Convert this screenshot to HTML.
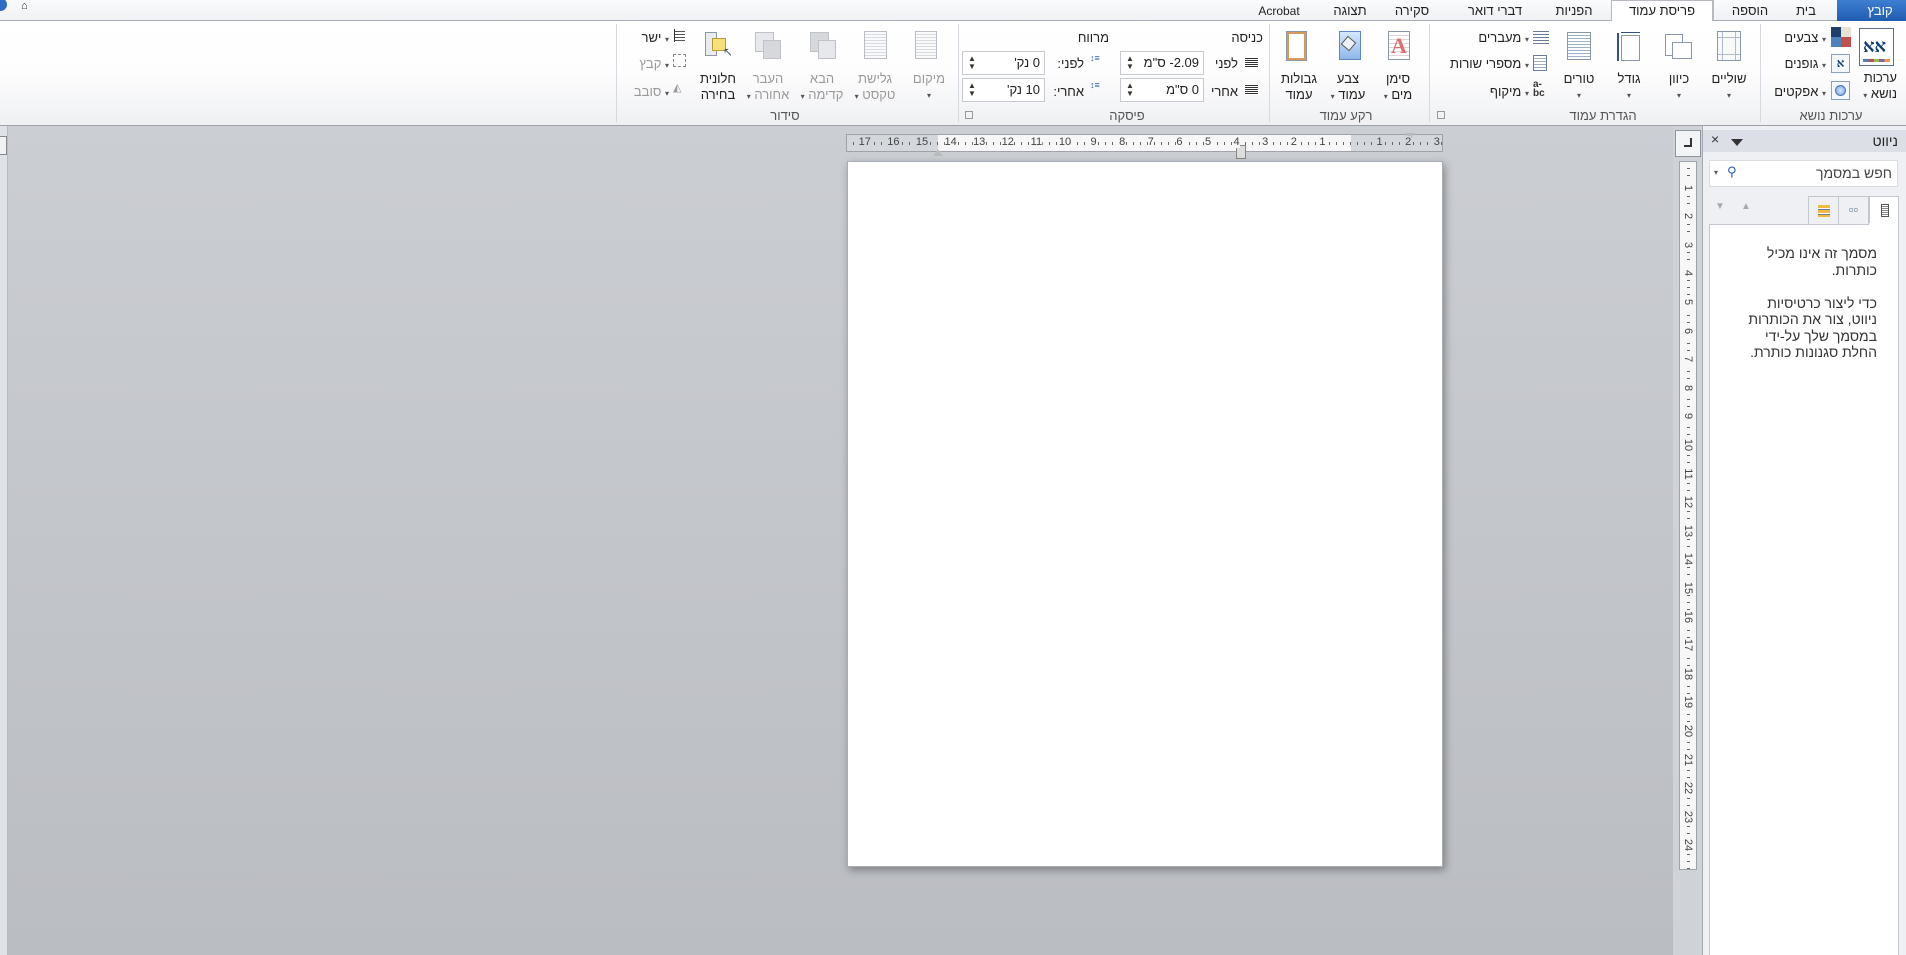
<!DOCTYPE html>
<html><head><meta charset="utf-8">
<style>
*{margin:0;padding:0;box-sizing:border-box}
body{width:1906px;height:955px;overflow:hidden;position:relative;font-family:"Liberation Sans","DejaVu Sans",sans-serif;background:#c4c7cc;color:#222}
.a{position:absolute}
.t{position:absolute;white-space:nowrap;font-size:13px;line-height:15px;direction:rtl}
.c{position:absolute;white-space:nowrap;font-size:13px;line-height:16px;text-align:center;direction:rtl;transform:translateX(-50%)}
.g{color:#9a9a9a}
.dd{font-size:8px;color:#555}
.sep{position:absolute;top:24px;width:1px;height:98px;background:#d6dae0}
.lab{position:absolute;top:108px;font-size:13px;color:#555;transform:translateX(-50%);white-space:nowrap;direction:rtl}
.spin{position:absolute;height:24px;background:#fff;border:1px solid #c6cad0;font-size:13px;line-height:22px;direction:rtl;padding-right:4px}
.spin i{position:absolute;left:5px;font-style:normal;font-size:8px;color:#333;line-height:8px}
.rn{position:absolute;font-size:11px;color:#444;transform:translateX(-50%);top:136px;background:inherit}
.vn{position:absolute;left:1681px;font-size:11px;color:#444;transform:rotate(90deg);width:14px;text-align:center}
</style></head><body>
<!-- tab bar -->
<div class="a" style="left:0;top:0;width:1906px;height:21px;background:linear-gradient(#fbfcfd,#eef0f3);border-bottom:1px solid #a9adb3"></div>
<div class="a" style="left:-6px;top:-2px;width:13px;height:13px;border-radius:50%;background:#2d6bc7"></div>
<div class="a" style="left:21px;top:0px;font-size:11px">⌂</div>
<div class="a" style="left:1837px;top:0;width:69px;height:21px;background:linear-gradient(#3e7fd1,#1f5cb0)"></div>
<div class="c" style="left:1880px;top:3px;color:#fff">קובץ</div>
<div class="c" style="left:1806px;top:3px">בית</div>
<div class="a" style="left:1713px;top:0;width:1px;height:21px;background:#b8bcc2"></div>
<div class="c" style="left:1750px;top:3px">הוספה</div>
<div class="a" style="left:1611px;top:0;width:102px;height:22px;background:#fff;border:1px solid #b6bac0;border-bottom:none"></div>
<div class="c" style="left:1662px;top:3px">פריסת עמוד</div>
<div class="c" style="left:1574px;top:3px">הפניות</div>
<div class="c" style="left:1495px;top:3px">דברי דואר</div>
<div class="c" style="left:1412px;top:3px">סקירה</div>
<div class="c" style="left:1350px;top:3px">תצוגה</div>
<div class="c" style="left:1279px;top:3px;font-size:12px">Acrobat</div>
<!-- ribbon -->
<div class="a" style="left:0;top:21px;width:1906px;height:105px;background:linear-gradient(#fff 0%,#fdfdfe 50%,#eff0f2 100%);border-bottom:1px solid #9ea2a8"></div>
<div class="sep" style="left:1760px"></div><div class="sep" style="left:1429px"></div><div class="sep" style="left:1269px"></div><div class="sep" style="left:958px"></div><div class="sep" style="left:616px"></div>
<!-- ערכות נושא -->
<div class="a" style="left:1859px;top:28px;width:35px;height:38px;border:1px solid #5b6f8b;background:#fff"><div style="font:bold 18px 'DejaVu Serif',serif;color:#123f7c;margin:7px 0 0 3px">אא</div><div class="a" style="left:3px;bottom:3px;width:27px;height:3px;background:linear-gradient(90deg,#4f81bd 20%,#c0504d 20% 40%,#9bbb59 40% 60%,#8064a2 60% 80%,#f79646 80%)"></div></div>
<div class="t" style="right:9px;top:70px">ערכות</div>
<div class="t" style="right:9px;top:86px">נושא <span class="dd">▾</span></div>
<div class="a" style="left:1831px;top:27px;width:20px;height:20px;background:linear-gradient(90deg,#1f3f6e 50%,#e8e2d2 50%);"><div class="a" style="left:0;top:10px;width:20px;height:10px;background:linear-gradient(90deg,#4f81bd 50%,#c0504d 50%)"></div></div>
<div class="t" style="right:80px;top:30px"><span class="dd">▾</span> צבעים</div>
<div class="a" style="left:1831px;top:54px;width:19px;height:19px;border:1px solid #8aa0bd;background:#f4f7fb;font:bold 12px serif;text-align:center;line-height:17px;color:#123f7c">א</div>
<div class="t" style="right:80px;top:56px"><span class="dd">▾</span> גופנים</div>
<div class="a" style="left:1831px;top:81px;width:19px;height:19px;border:1px solid #8aa0bd;background:#f4f7fb"><div style="margin:3px;width:11px;height:11px;border-radius:50%;background:radial-gradient(#d8e8ff,#6b9be0);border:1px solid #4a74b4"></div></div>
<div class="t" style="right:80px;top:84px"><span class="dd">▾</span> אפקטים</div>
<div class="lab" style="left:1831px">ערכות נושא</div>
<!-- הגדרת עמוד -->
<div class="a" style="left:1717px;top:31px;width:24px;height:30px;border:1px solid #8a97a8;background:#f8f9fb"><div class="a" style="left:4px;top:0;width:1px;height:28px;background:#b0bccb"></div><div class="a" style="right:4px;top:0;width:1px;height:28px;background:#b0bccb"></div><div class="a" style="left:0;top:5px;width:22px;height:1px;background:#b0bccb"></div><div class="a" style="left:0;bottom:5px;width:22px;height:1px;background:#b0bccb"></div></div>
<div class="c" style="left:1729px;top:71px">שוליים</div><div class="c dd" style="left:1729px;top:88px">▾</div>
<div class="a" style="left:1665px;top:34px;width:18px;height:22px;border:1px solid #8a97a8;background:#fff"></div><div class="a" style="left:1672px;top:42px;width:20px;height:17px;border:1px solid #8a97a8;background:#fff"></div>
<div class="c" style="left:1679px;top:71px">כיוון</div><div class="c dd" style="left:1679px;top:88px">▾</div>
<div class="a" style="left:1617px;top:33px;width:2px;height:28px;background:#34508a"></div><div class="a" style="left:1621px;top:35px;width:19px;height:26px;border:1px solid #8a97a8;background:#fff"></div><div class="a" style="left:1621px;top:32px;width:19px;height:1px;background:#34508a"></div>
<div class="c" style="left:1629px;top:71px">גודל</div><div class="c dd" style="left:1629px;top:88px">▾</div>
<div class="a" style="left:1567px;top:32px;width:24px;height:28px;border:1px solid #8a97a8;background:repeating-linear-gradient(#fff 0 2px,#9fb0c6 2px 3px)"></div>
<div class="c" style="left:1579px;top:71px">טורים</div><div class="c dd" style="left:1579px;top:88px">▾</div>
<div class="a" style="left:1533px;top:29px;width:16px;height:15px;background:repeating-linear-gradient(#fff 0 2px,#6a7b94 2px 3px)"></div>
<div class="t" style="right:377px;top:30px"><span class="dd">▾</span> מעברים</div>
<div class="a" style="left:1533px;top:55px;width:14px;height:16px;border:1px solid #6a7b94;background:repeating-linear-gradient(#fff 0 2px,#9fb0c6 2px 3px)"></div>
<div class="t" style="right:377px;top:56px"><span class="dd">▾</span> מספרי שורות</div>
<div class="a" style="left:1533px;top:80px;font-size:10px;line-height:9px;font-weight:bold;color:#333">a-<br>bc</div>
<div class="t" style="right:377px;top:84px"><span class="dd">▾</span> מיקוף</div>
<div class="lab" style="left:1603px">הגדרת עמוד</div>
<div class="a" style="left:1437px;top:111px;width:8px;height:8px;border:1px solid #999"></div>
<!-- רקע עמוד -->
<div class="a" style="left:1388px;top:31px;width:22px;height:29px;border:1px solid #8a97a8;background:repeating-linear-gradient(#fff 0 3px,#e6d3d3 3px 4px);color:#e07070;font:bold 22px serif;text-align:center;line-height:28px">A</div>
<div class="c" style="left:1398px;top:71px">סימן</div><div class="c" style="left:1398px;top:87px">מים <span class="dd">▾</span></div>
<div class="a" style="left:1339px;top:31px;width:22px;height:29px;border:1px solid #5f87bb;background:linear-gradient(#d5e7fb,#8fb8ea)"></div><div class="a" style="left:1343px;top:38px;width:11px;height:11px;background:#eef2f6;border:1px solid #555;transform:rotate(40deg)"></div>
<div class="c" style="left:1348px;top:71px">צבע</div><div class="c" style="left:1348px;top:87px">עמוד <span class="dd">▾</span></div>
<div class="a" style="left:1287px;top:32px;width:19px;height:28px;border:2px solid #d89a5c;background:#fff;outline:1px solid #8a97a8"></div>
<div class="c" style="left:1299px;top:71px">גבולות</div><div class="c" style="left:1299px;top:87px">עמוד</div>
<div class="lab" style="left:1346px">רקע עמוד</div>
<!-- פיסקה -->
<div class="t" style="right:643px;top:30px">כניסה</div>
<div class="a" style="left:1245px;top:57px;width:13px;height:11px;background:repeating-linear-gradient(#fff 0 1px,#333 1px 2px)"></div>
<div class="t" style="right:668px;top:56px">לפני</div>
<div class="a" style="left:1245px;top:84px;width:13px;height:11px;background:repeating-linear-gradient(#fff 0 1px,#333 1px 2px)"></div>
<div class="t" style="right:668px;top:84px">אחרי</div>
<div class="spin" style="left:1120px;top:51px;width:84px">2.09- ס"מ<i style="top:3px">▲</i><i style="top:11px">▼</i></div>
<div class="spin" style="left:1120px;top:78px;width:84px">0 ס"מ<i style="top:3px">▲</i><i style="top:11px">▼</i></div>
<div class="t" style="right:797px;top:30px">מרווח</div>
<div class="a" style="left:1090px;top:55px;width:14px;height:14px;font-size:9px;line-height:7px;color:#2b5fb2">↕≡</div>
<div class="t" style="right:822px;top:56px">לפני:</div>
<div class="a" style="left:1090px;top:82px;width:14px;height:14px;font-size:9px;line-height:7px;color:#2b5fb2">↕≡</div>
<div class="t" style="right:822px;top:84px">אחרי:</div>
<div class="spin" style="left:962px;top:51px;width:83px">0 נק'<i style="top:3px">▲</i><i style="top:11px">▼</i></div>
<div class="spin" style="left:962px;top:78px;width:83px">10 נק'<i style="top:3px">▲</i><i style="top:11px">▼</i></div>
<div class="lab" style="left:1127px">פיסקה</div>
<div class="a" style="left:965px;top:111px;width:8px;height:8px;border:1px solid #999"></div>
<!-- סידור -->
<div class="a" style="left:915px;top:31px;width:22px;height:28px;border:1px solid #b9bec6;background:repeating-linear-gradient(#fafafa 0 2px,#d8dce2 2px 3px)"></div>
<div class="c g" style="left:929px;top:71px">מיקום</div><div class="c dd g" style="left:929px;top:88px">▾</div>
<div class="a" style="left:864px;top:31px;width:23px;height:28px;border:1px solid #b9bec6;background:repeating-linear-gradient(#fafafa 0 2px,#d8dce2 2px 3px)"></div>
<div class="c g" style="left:875px;top:71px">גלישת</div><div class="c g" style="left:875px;top:87px">טקסט <span class="dd">▾</span></div>
<div class="a" style="left:810px;top:32px;width:19px;height:20px;background:#d6d8dc;border:1px solid #bfc3c8"></div><div class="a" style="left:818px;top:40px;width:18px;height:19px;background:#e6e8eb;border:1px solid #bfc3c8"></div>
<div class="c g" style="left:822px;top:71px">הבא</div><div class="c g" style="left:822px;top:87px">קדימה <span class="dd">▾</span></div>
<div class="a" style="left:755px;top:32px;width:19px;height:20px;background:#e6e8eb;border:1px solid #bfc3c8"></div><div class="a" style="left:763px;top:40px;width:18px;height:19px;background:#d6d8dc;border:1px solid #bfc3c8"></div>
<div class="c g" style="left:768px;top:71px">העבר</div><div class="c g" style="left:768px;top:87px">אחורה <span class="dd">▾</span></div>
<div class="a" style="left:705px;top:32px;width:12px;height:24px;border:1px solid #8a97a8;background:#e8ecf1"></div><div class="a" style="left:712px;top:38px;width:14px;height:13px;border:1px solid #b99b2e;background:#f6e07a"></div><div class="a" style="left:723px;top:45px;font-size:12px;color:#456">↖</div>
<div class="c" style="left:718px;top:71px">חלונית</div><div class="c" style="left:718px;top:87px">בחירה</div>
<div class="a" style="left:674px;top:29px;width:11px;height:13px;border-left:1px solid #333;background:repeating-linear-gradient(#fff 0 2px,#555 2px 3px)"></div>
<div class="t" style="right:1237px;top:30px"><span class="dd">▾</span> ישר</div>
<div class="a" style="left:673px;top:54px;width:13px;height:13px;border:1px dashed #888"></div>
<div class="t g" style="right:1237px;top:56px"><span class="dd">▾</span> קבץ</div>
<div class="a g" style="left:673px;top:81px;font-size:11px">◭</div>
<div class="t g" style="right:1237px;top:84px"><span class="dd">▾</span> סובב</div>
<div class="lab" style="left:785px">סידור</div>
<!-- document area -->
<div class="a" style="left:0;top:126px;width:1673px;height:829px;background:linear-gradient(#cbced3,#babdc2)"></div>
<div class="a" style="left:0;top:126px;width:8px;height:829px;background:#dfe2e6;border-right:1px solid #b8bcc2"></div>
<div class="a" style="left:-4px;top:136px;width:11px;height:19px;border:1px solid #888;background:#f1f2f4"></div>
<!-- h ruler -->
<div class="a" style="left:846px;top:134px;width:597px;height:18px;background:#d4d7dc;border:1px solid #9ea3aa"></div>
<div class="a" style="left:938px;top:135px;width:413px;height:16px;background:#f7f7f8"></div>
<div class="a" style="left:847px;top:142px;width:595px;height:3px;background:repeating-linear-gradient(90deg,transparent 0 6px,#666 6px 7px)"></div>
<div class="a" style="left:933px;top:144px;width:0;height:0;border:5px solid transparent;border-bottom:7px solid #bbb"></div>
<div class="a" style="left:1236px;top:145px;width:10px;height:14px;background:#ddd;border:1px solid #888"></div>
<div class="a" style="left:1405px;top:133px;width:0;height:0;border:5px solid transparent;border-top:7px solid #bbb"></div>
<div id="hr"></div>
<!-- page -->
<div class="a" style="left:847px;top:161px;width:596px;height:706px;background:#fff;box-shadow:2px 3px 8px rgba(0,0,0,.35);border:1px solid #a9adb3"></div>
<!-- v ruler -->
<div class="a" style="left:1673px;top:126px;width:29px;height:829px;background:#cfd3d8"></div>
<div class="a" style="left:1675px;top:130px;width:26px;height:27px;border:1px solid #8e949c;background:#f3f4f6"><div class="a" style="left:8px;top:7px;width:8px;height:9px;border-right:2px solid #333;border-bottom:2px solid #333"></div></div>
<div class="a" style="left:1679px;top:161px;width:18px;height:709px;background:#f7f7f8;border:1px solid #9ea3aa"></div>
<div class="a" style="left:1687px;top:162px;width:3px;height:707px;background:repeating-linear-gradient(transparent 0 6px,#666 6px 7px)"></div>
<div id="vr"></div>
<!-- nav pane -->
<div class="a" style="left:1702px;top:126px;width:204px;height:829px;background:#eef0f3;border-left:1px solid #a4a9b0"></div>
<div class="a" style="left:1703px;top:130px;width:203px;height:22px;background:#dce0e6"></div>
<div class="a" style="left:1711px;top:131px;font-size:14px;color:#333">×</div>
<div class="a" style="left:1731px;top:139px;width:0;height:0;border:6px solid transparent;border-top:7px solid #333"></div>
<div class="t" style="right:8px;top:134px;font-size:14px">ניווט</div>
<div class="a" style="left:1709px;top:160px;width:189px;height:27px;background:#fff;border:1px solid #d9dce0"></div>
<div class="t" style="right:14px;top:166px;font-size:14px;color:#444">חפש במסמך</div>
<div class="a" style="left:1727px;top:164px;font-size:13px;color:#2b5fb2">⚲</div>
<div class="a dd" style="left:1714px;top:168px">▾</div>
<div class="a" style="left:1715px;top:201px;font-size:10px;color:#aaa">▼</div><div class="a" style="left:1741px;top:201px;font-size:10px;color:#aaa">▲</div>
<div class="a" style="left:1808px;top:196px;width:31px;height:29px;border:1px solid #c4c8ce;background:#eef0f3"><div style="margin:8px 9px;width:12px;height:12px;background:repeating-linear-gradient(#f0b840 0 3px,#fff 3px 4px,#6a7b94 4px 5px)"></div></div>
<div class="a" style="left:1838px;top:196px;width:31px;height:29px;border:1px solid #c4c8ce;background:#eef0f3;font-size:13px;text-align:center;line-height:26px;color:#5a6a80">▫▫</div>
<div class="a" style="left:1869px;top:196px;width:30px;height:29px;border:1px solid #c4c8ce;border-bottom:none;background:#fff"><div style="margin:7px 11px;width:8px;height:13px;border:1px solid #555;background:repeating-linear-gradient(#fff 0 1px,#888 1px 2px)"></div></div>
<div class="a" style="left:1709px;top:224px;width:190px;height:731px;background:#fff;border:1px solid #c4c8ce;border-bottom:none"></div>
<div class="a" style="left:1869px;top:223px;width:29px;height:3px;background:#fff"></div>
<div class="t" style="right:29px;top:245px;font-size:14px;line-height:16.5px;text-align:right;color:#333">מסמך זה אינו מכיל<br>כותרות.<br><br>כדי ליצור כרטיסיות<br>ניווט, צור את הכותרות<br>במסמך שלך על-ידי<br>החלת סגנונות כותרת.</div>
<script>
var h='';for(var n=1;n<=24;n++){h+='<div class="vn" style="top:'+(153+n*28.6)+'px;background:#f7f7f8">'+n+'</div>';}
document.getElementById('vr').innerHTML=h;
var r='';for(var n=1;n<=17;n++){var x=1351-n*28.6;r+='<div class="rn" style="left:'+x+'px;background:'+(x<938?'#d4d7dc':'#f7f7f8')+'">'+n+'</div>';}
for(var n=1;n<=3;n++){r+='<div class="rn" style="left:'+(1351+n*28.6)+'px;background:#d4d7dc">'+n+'</div>';}
document.getElementById('hr').innerHTML=r;
</script>
</body></html>
